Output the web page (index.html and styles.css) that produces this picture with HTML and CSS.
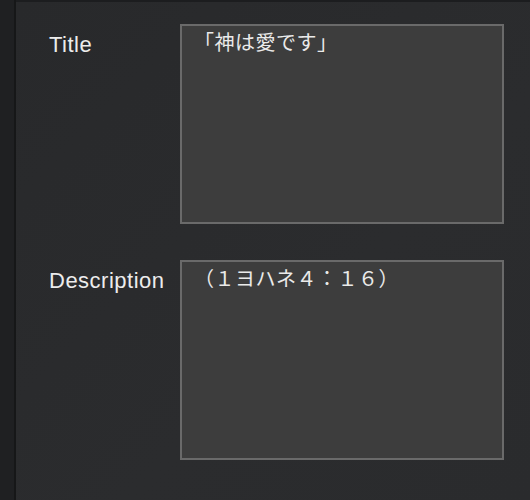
FILE: index.html
```html
<!DOCTYPE html>
<html lang="ja">
<head>
<meta charset="utf-8">
<title>Form</title>
<link rel="stylesheet" href="styles.css">
</head>
<body>
<div class="app">
  <div class="rail"></div>
  <div class="panel">
    <div class="row">
      <label class="label" for="title">Title</label>
      <textarea id="title" class="field">「神は愛です」</textarea>
    </div>
    <div class="row">
      <label class="label" for="desc">Description</label>
      <textarea id="desc" class="field">（１ヨハネ４：１６）</textarea>
    </div>
  </div>
</div>
</body>
</html>
```
FILE: styles.css
```css
html, body {
  margin: 0;
  padding: 0;
  height: 100%;
  background: #2a2b2d;
}
.app {
  display: flex;
  height: 100%;
}
.rail {
  width: 14px;
  flex: none;
  background: #1f2022;
  border-right: 2px solid #161718;
}
.panel {
  flex: 1;
  border-top: 2px solid #1c1d1f;
  background: linear-gradient(135deg, #28292b 0%, #2b2c2e 60%, #2a2b2d 100%);
  padding: 22px 0 0 33px;
  display: flex;
  flex-direction: column;
  gap: 36px;
}
.row {
  display: flex;
  align-items: flex-start;
}
.label {
  width: 131px;
  flex: none;
  padding-top: 8px;
  font-family: "Liberation Sans", Arial, sans-serif;
  font-size: 22px;
  letter-spacing: 0.5px;
  color: #ececec;
}
.field {
  box-sizing: border-box;
  width: 324px;
  height: 200px;
  margin: 0;
  border: 2px solid #6a6a6a;
  background: #3d3d3d;
  color: #eaeaea;
  font-family: "Noto Sans CJK JP", "Noto Sans", sans-serif;
  font-size: 20px;
  line-height: 1.2;
  padding: 4px 8px 4px 12px;
  resize: none;
  outline: none;
  overflow: hidden;
  letter-spacing: 0.5px;
}
```
